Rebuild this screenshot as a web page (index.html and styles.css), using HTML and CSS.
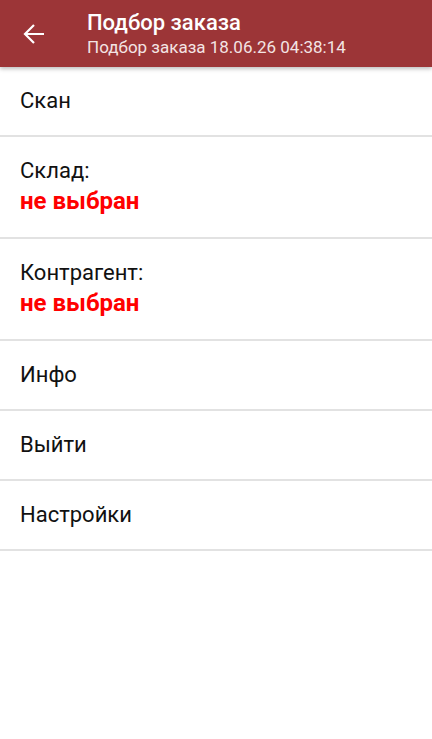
FILE: index.html
```html
<!DOCTYPE html>
<html lang="ru">
<head>
  <meta charset="UTF-8">
  <meta name="viewport" content="width=device-width, initial-scale=1.0">
  <title>Подбор заказа</title>
  <link rel="stylesheet" href="styles.css">
</head>
<body>
  <header class="toolbar">
    <button class="back-btn" aria-label="Назад">
      <svg width="22" height="22" viewBox="0 0 22 22">
        <path d="M21 11H2.5M11 2L2 11l9 9" fill="none" stroke="#fff" stroke-width="2.2"/>
      </svg>
    </button>
    <div class="toolbar-titles">
      <div class="toolbar-title">Подбор заказа</div>
      <div class="toolbar-subtitle">Подбор заказа 18.06.26 04:38:14</div>
    </div>
  </header>

  <ul class="menu">
    <li class="menu-item">Скан</li>
    <li class="menu-item tall">
      <div>Склад:</div>
      <div class="not-set">не выбран</div>
    </li>
    <li class="menu-item tall">
      <div>Контрагент:</div>
      <div class="not-set">не выбран</div>
    </li>
    <li class="menu-item">Инфо</li>
    <li class="menu-item">Выйти</li>
    <li class="menu-item">Настройки</li>
  </ul>
</body>
</html>
```

FILE: styles.css
```css
body {
  margin: 0;
  font-family: Roboto, "Noto Sans", sans-serif;
  background: #fff;
  color: #111;
}
.toolbar {
  height: 67px;
  background: #9c3537;
  display: flex;
  align-items: center;
  box-shadow: 0 2px 4px rgba(0, 0, 0, 0.25);
  position: relative;
}
.back-btn {
  width: 68px;
  height: 67px;
  border: none;
  background: none;
  padding: 0 0 0 23px;
  display: flex;
  align-items: center;
  cursor: pointer;
}
.toolbar-titles {
  margin-left: 19px;
  color: #fff;
}
.toolbar-title {
  font-size: 22px;
  font-weight: 500;
  line-height: 27px;
}
.toolbar-subtitle {
  font-size: 17px;
  line-height: 22px;
  color: #f3e4e4;
}
.menu {
  list-style: none;
  margin: 0;
  padding: 0;
}
.menu-item {
  height: 68px;
  border-bottom: 2px solid #e2e2e2;
  padding: 0 20px;
  font-size: 22px;
  display: flex;
  flex-direction: column;
  justify-content: center;
  line-height: 28px;
  cursor: pointer;
}
.menu-item.tall {
  height: 100px;
}
.not-set {
  color: #ff0000;
  font-weight: bold;
  font-size: 24px;
  line-height: 32px;
}
```
